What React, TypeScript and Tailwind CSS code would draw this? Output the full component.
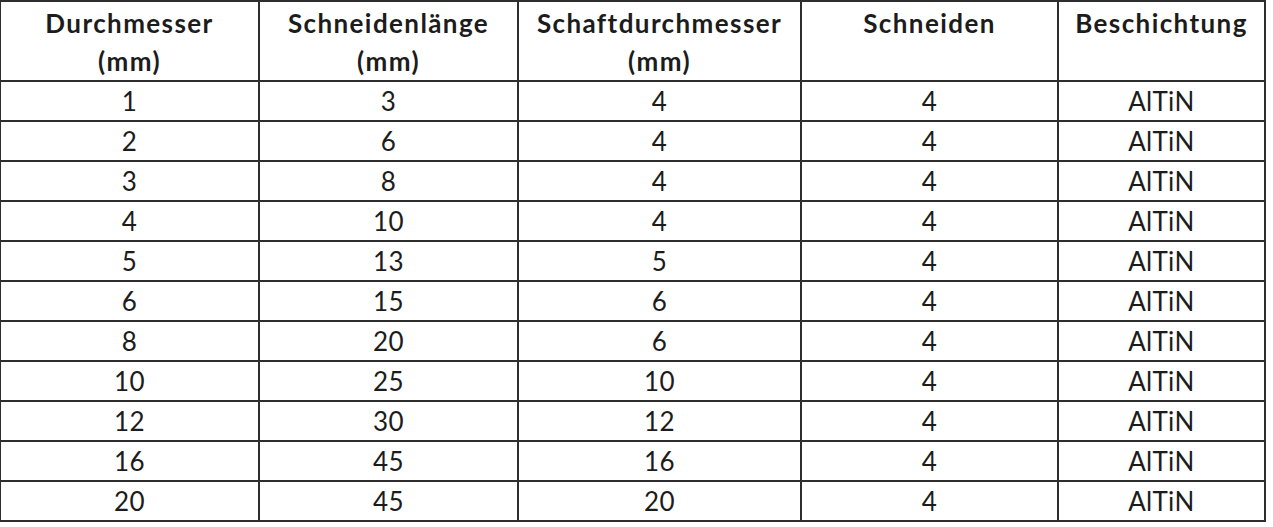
import React from 'react';

const cols = [
  { title: 'Durchmesser', sub: '(mm)', w: 'w-[259px]' },
  { title: 'Schneidenlänge', sub: '(mm)', w: 'w-[259px]' },
  { title: 'Schaftdurchmesser', sub: '(mm)', w: 'w-[283px]' },
  { title: 'Schneiden', sub: '', w: 'w-[257px]' },
  { title: 'Beschichtung', sub: '', w: 'w-[207px]' },
];

const rows = [
  ['1', '3', '4', '4', 'AlTiN'],
  ['2', '6', '4', '4', 'AlTiN'],
  ['3', '8', '4', '4', 'AlTiN'],
  ['4', '10', '4', '4', 'AlTiN'],
  ['5', '13', '5', '4', 'AlTiN'],
  ['6', '15', '6', '4', 'AlTiN'],
  ['8', '20', '6', '4', 'AlTiN'],
  ['10', '25', '10', '4', 'AlTiN'],
  ['12', '30', '12', '4', 'AlTiN'],
  ['16', '45', '16', '4', 'AlTiN'],
  ['20', '45', '20', '4', 'AlTiN'],
];

export default function App() {
  return (
    <div className="w-[1273px] h-[527px] bg-white overflow-hidden font-['Lato',sans-serif] text-[#1c1c1c]">
      <table className="border-collapse table-fixed -ml-[1px]">
        <thead>
          <tr className="h-[80px]">
            {cols.map((c) => (
              <th
                key={c.title}
                className={`${c.w} border-2 border-[#2e2e2e] align-top pt-[2px] text-[26px] leading-[38px] tracking-[1.4px] font-bold text-center`}
              >
                <div>{c.title}</div>
                {c.sub && <div>{c.sub}</div>}
              </th>
            ))}
          </tr>
        </thead>
        <tbody>
          {rows.map((r, i) => (
            <tr key={i} className="h-[40px]">
              {r.map((v, j) => (
                <td
                  key={j}
                  className="border-2 border-[#2e2e2e] text-center text-[26px] leading-[36px] p-0 tracking-[0.4px]"
                >
                  {v}
                </td>
              ))}
            </tr>
          ))}
        </tbody>
      </table>
    </div>
  );
}
